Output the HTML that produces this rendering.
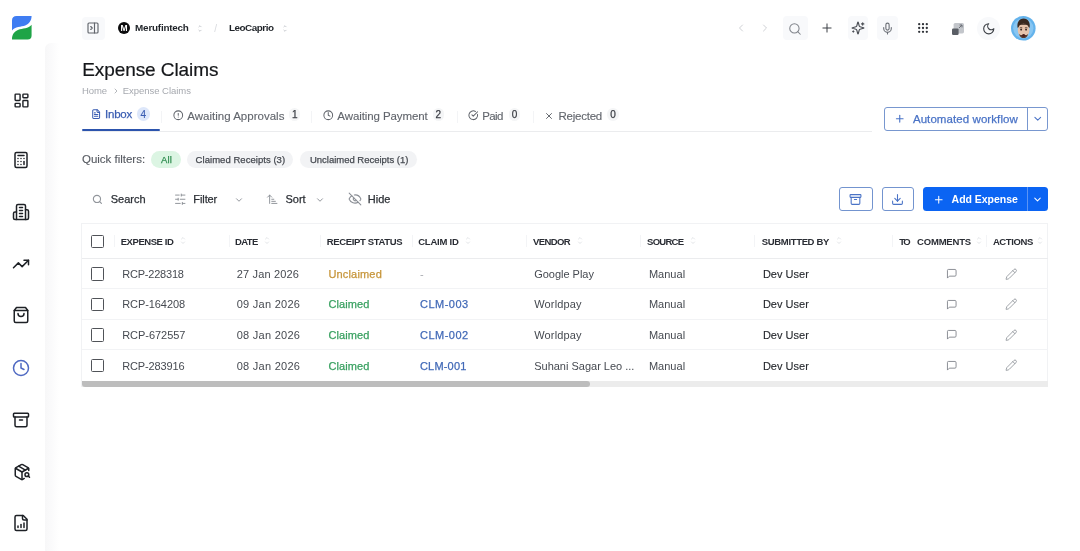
<!DOCTYPE html>
<html lang="en"><head><meta charset="utf-8"><title>Expense Claims</title>
<style>
*{box-sizing:border-box;margin:0;padding:0}
html,body{width:1080px;height:551px;overflow:hidden;background:#fff;font-family:"Liberation Sans",sans-serif}
body{position:relative}
.a{position:absolute}
.t{position:absolute;white-space:nowrap;line-height:1;font-family:"Liberation Sans",sans-serif}
svg{position:absolute;overflow:visible}
.ic{fill:none;stroke-linecap:round;stroke-linejoin:round}
.hl{position:absolute;height:1px;background:#f2f3f5}
.vs{position:absolute;width:1px;background:#f3f4f6}
.cb{position:absolute;width:13.4px;height:13.4px;border:1.4px solid #505358;border-radius:1.5px;background:#fff}
.bdg{position:absolute;border-radius:7px;background:#f4f5f6}
.pill{position:absolute;border-radius:9px;background:#f2f3f5;height:17px;top:151px}
.tl{position:absolute;left:0;top:0;width:1080px;height:551px;will-change:transform}

</style></head>
<body>
<!-- content panel subtle left shade -->
<div class="a" style="left:45px;top:43px;width:14px;height:508px;background:linear-gradient(90deg,#f7f7f8 0%,#fafafb 40%,#ffffff 100%);border-top-left-radius:6px"></div>

<!-- logo -->
<svg style="left:12px;top:15.6px" width="19.6" height="23.4" viewBox="0 0 19.6 23.4">
<path d="M0,14.5 L0,4.6 Q0,0 4.6,0 L19.6,0 C19.6,4.4 17.2,8 13.2,9.5 C9.2,10.9 3,10.6 0,14.5 Z" fill="#3f7df2"/>
<path d="M19.6,8.8 L19.6,19.4 Q19.6,23.4 15.6,23.4 L0,23.4 C0,18.6 2.4,15.4 6.4,13.8 C10.4,12.3 16.6,12.700 19.6,8.8 Z" fill="#1fa447"/>
</svg>

<!-- sidebar icons -->
<svg class="ic" style="left:12.700px;top:92.100px" width="17" height="17" viewBox="0 0 24 24" stroke="#1e2126" stroke-width="2"><rect width="7" height="9" x="3" y="3" rx="1"/><rect width="7" height="5" x="14" y="3" rx="1"/><rect width="7" height="9" x="14" y="12" rx="1"/><rect width="7" height="5" x="3" y="16" rx="1"/></svg>
<svg class="ic" style="left:12px;top:151px" width="18" height="18" viewBox="0 0 24 24" stroke="#1e2126" stroke-width="2"><rect width="16" height="20" x="4" y="2" rx="2"/><line x1="8" x2="16" y1="6" y2="6"/><line x1="16" x2="16" y1="14" y2="18"/><path d="M16 10h.01"/><path d="M12 10h.01"/><path d="M8 10h.01"/><path d="M12 14h.01"/><path d="M8 14h.01"/><path d="M12 18h.01"/><path d="M8 18h.01"/></svg>
<svg class="ic" style="left:12.300px;top:203px" width="18" height="18" viewBox="0 0 24 24" stroke="#1e2126" stroke-width="2"><path d="M6 22V4a2 2 0 0 1 2-2h8a2 2 0 0 1 2 2v18Z"/><path d="M6 12H4a2 2 0 0 0-2 2v6a2 2 0 0 0 2 2h2"/><path d="M18 9h2a2 2 0 0 1 2 2v9a2 2 0 0 1-2 2h-2"/><path d="M10 6h4"/><path d="M10 10h4"/><path d="M10 14h4"/><path d="M10 18h4"/></svg>
<svg class="ic" style="left:12.200px;top:255.3px" width="18" height="18" viewBox="0 0 24 24" stroke="#1e2126" stroke-width="2"><polyline points="22 7 13.5 15.5 8.5 10.5 2 17"/><polyline points="16 7 22 7 22 13"/></svg>
<svg class="ic" style="left:12.200px;top:306.400px" width="18" height="18" viewBox="0 0 24 24" stroke="#1e2126" stroke-width="2"><path d="M6 2 3 6v14a2 2 0 0 0 2 2h14a2 2 0 0 0 2-2V6l-3-4Z"/><path d="M3 6h18"/><path d="M16 10a4 4 0 0 1-8 0"/></svg>
<svg class="ic" style="left:12.200px;top:358.7px" width="18" height="18" viewBox="0 0 24 24" stroke="#4f69c2" stroke-width="2"><circle cx="12" cy="12" r="10"/><polyline points="12 6 12 12 16 14"/></svg>
<svg class="ic" style="left:12.400px;top:410.600px" width="18" height="18" viewBox="0 0 24 24" stroke="#1e2126" stroke-width="2"><rect width="20" height="5" x="2" y="3" rx="1"/><path d="M4 8v11a2 2 0 0 0 2 2h12a2 2 0 0 0 2-2V8"/><path d="M10 12h4"/></svg>
<svg class="ic" style="left:12.500px;top:462.600px" width="18" height="18" viewBox="0 0 24 24" stroke="#1e2126" stroke-width="2"><path d="M21 10V8a2 2 0 0 0-1-1.73l-7-4a2 2 0 0 0-2 0l-7 4A2 2 0 0 0 3 8v8a2 2 0 0 0 1 1.73l7 4a2 2 0 0 0 2 0l2-1.14"/><path d="m7.5 4.27 9 5.15"/><polyline points="3.29 7 12 12 20.71 7"/><line x1="12" x2="12" y1="22" y2="12"/><circle cx="18.500" cy="15.500" r="2.500"/><path d="M20.270 17.270 22 19"/></svg>
<svg class="ic" style="left:12.400px;top:514.300px" width="18" height="18" viewBox="0 0 24 24" stroke="#1e2126" stroke-width="2"><path d="M15 2H6a2 2 0 0 0-2 2v16a2 2 0 0 0 2 2h12a2 2 0 0 0 2-2V7Z"/><path d="M14 2v4a2 2 0 0 0 2 2h4"/><path d="M8 18v-2"/><path d="M12 18v-4"/><path d="M16 18v-6"/></svg>

<!-- top bar left -->
<div class="a" style="left:82px;top:17px;width:22.5px;height:22.5px;border-radius:4px;background:#f8f9fb"></div>
<svg class="ic" style="left:87.3px;top:22.3px" width="12" height="12" viewBox="0 0 24 24" stroke="#62666d" stroke-width="2.300"><rect x="2" y="2" width="20" height="20" rx="2"/><path d="M15 2v20"/><path d="M7.500 9l3 3-3 3"/></svg>
<div class="a" style="left:118.2px;top:22.4px;width:12px;height:12px;border-radius:50%;background:#0c0c0d;color:#fff;font-size:8.5px;font-weight:700;line-height:12.6px;text-align:center;will-change:transform">M</div>
<svg class="ic" style="left:197.300px;top:24.300px" width="6" height="9" viewBox="0 0 6 9" stroke="#c9ccd1" stroke-width="1"><path d="M1.900 2.800 3 1.700 4.100 2.800"/><path d="M1.900 6.200 3 7.300 4.100 6.200"/></svg>
<svg class="ic" style="left:281.700px;top:24.300px" width="6" height="9" viewBox="0 0 6 9" stroke="#c9ccd1" stroke-width="1"><path d="M1.900 2.800 3 1.700 4.100 2.800"/><path d="M1.900 6.200 3 7.300 4.100 6.200"/></svg>

<!-- top bar right -->
<svg class="ic" style="left:735px;top:22px" width="12" height="12" viewBox="0 0 24 24" stroke="#cfd1d5" stroke-width="2"><path d="m15 18-6-6 6-6"/></svg>
<svg class="ic" style="left:759px;top:22px" width="12" height="12" viewBox="0 0 24 24" stroke="#cfd1d5" stroke-width="2"><path d="m9 18 6-6-6-6"/></svg>
<div class="a" style="left:783px;top:16.300px;width:24.500px;height:24px;border-radius:4px;background:#f8f9fb"></div>
<svg class="ic" style="left:788.300px;top:21.600px" width="14" height="14" viewBox="0 0 24 24" stroke="#80848b" stroke-width="1.800"><circle cx="11" cy="11" r="8"/><path d="m21 21-4.300-4.300"/></svg>
<svg class="ic" style="left:819.700px;top:21.300px" width="14" height="14" viewBox="0 0 24 24" stroke="#3a3d43" stroke-width="1.700"><path d="M5 12h14"/><path d="M12 5v14"/></svg>
<div class="a" style="left:848px;top:16.300px;width:19.500px;height:24px;border-radius:4px;background:#f8f9fb"></div>
<svg class="ic" style="left:850.700px;top:21.400px" width="14" height="14" viewBox="0 0 24 24" stroke="#4a4e55" stroke-width="2"><path d="M9.937 15.500A2 2 0 0 0 8.500 14.063l-6.135-1.582a.5.500 0 0 1 0-.962L8.500 9.936A2 2 0 0 0 9.937 8.500l1.582-6.135a.5.500 0 0 1 .963 0L14.063 8.500A2 2 0 0 0 15.500 9.937l6.135 1.581a.5.500 0 0 1 0 .964L15.500 14.063a2 2 0 0 0-1.437 1.437l-1.582 6.135a.5.500 0 0 1-.963 0z"/><path d="M20 3v4"/><path d="M22 5h-4"/><path d="M4 17v2"/><path d="M5 18H3"/></svg>
<div class="a" style="left:876.700px;top:16.300px;width:21px;height:24px;border-radius:4px;background:#f8f9fb"></div>
<svg class="ic" style="left:881.300px;top:21.600px" width="13" height="13" viewBox="0 0 24 24" stroke="#6a6e75" stroke-width="2"><path d="M12 2a3 3 0 0 0-3 3v7a3 3 0 0 0 6 0V5a3 3 0 0 0-3-3Z"/><path d="M19 10v2a7 7 0 0 1-14 0v-2"/><line x1="12" x2="12" y1="19" y2="22"/></svg>
<svg style="left:918px;top:23.200px" width="10" height="10" viewBox="0 0 10 10" fill="#2f3238"><circle cx="1.2" cy="1.2" r="1.150"/><circle cx="5.0" cy="1.2" r="1.150"/><circle cx="8.8" cy="1.2" r="1.150"/><circle cx="1.2" cy="5.0" r="1.150"/><circle cx="5.0" cy="5.0" r="1.150"/><circle cx="8.8" cy="5.0" r="1.150"/><circle cx="1.2" cy="8.8" r="1.150"/><circle cx="5.0" cy="8.8" r="1.150"/><circle cx="8.8" cy="8.8" r="1.150"/></svg>
<svg style="left:951.700px;top:22.500px" width="12" height="12" viewBox="0 0 12 12"><rect x="1.600" y="0" width="10.400" height="10.400" rx="1.600" fill="#c3c6cb"/><rect x="0" y="5.400" width="6.600" height="6.600" rx="1.200" fill="#5a5e65"/><path d="M7 5 10 2M7.600 2H10v2.400" stroke="#6b6f76" stroke-width="1" fill="none"/></svg>
<div class="a" style="left:976.700px;top:16.500px;width:23.500px;height:23.500px;border-radius:50%;background:#f8f9fb"></div>
<svg class="ic" style="left:981.800px;top:21.600px" width="13.500" height="13.500" viewBox="0 0 24 24" stroke="#3c4046" stroke-width="2"><path d="M12 3a6 6 0 0 0 9 9 9 9 0 1 1-9-9Z"/></svg>
<!-- avatar -->
<svg style="left:1011.400px;top:15.700px" width="24.600" height="24.600" viewBox="0 0 25 25">
<circle cx="12.500" cy="12.500" r="12.500" fill="#64b3ec"/>
<circle cx="12.500" cy="12.500" r="10.300" fill="#88c6f2"/>
<g>
<path d="M6.700 12C5.800 6.500 8.200 2.800 12.800 2.600C17.400 2.800 19.800 6.500 18.900 12Z" fill="#3a2920"/>
<ellipse cx="12.800" cy="14.600" rx="5.900" ry="7" fill="#e7c3ab"/>
<path d="M7 10.800C7.300 8.200 9 7.200 12.800 7.500C16.600 7.200 18.300 8.200 18.600 10.800C18 9.200 16.500 8.600 12.800 8.900C9.100 8.600 7.600 9.200 7 10.800Z" fill="#3a2920"/>
<path d="M8.200 18.200C9 21.500 10.800 22.400 12.800 22.400S16.600 21.500 17.400 18.200C16 19.600 14.600 19.300 12.800 19.300S9.600 19.600 8.200 18.200Z" fill="#5b3b2e"/>
<ellipse cx="12.800" cy="19.700" rx="1.500" ry="1.300" fill="#4a1f1c"/>
<ellipse cx="10.300" cy="13.800" rx="1" ry="1.100" fill="#3b2a24"/><ellipse cx="15.300" cy="13.800" rx="1" ry="1.100" fill="#3b2a24"/>
<path d="M8.800 12.100Q10.200 11.200 11.500 12M14.100 12Q15.400 11.200 16.800 12.100" stroke="#4a342a" stroke-width=".7" fill="none"/>
</g>
</svg>

<!-- breadcrumb chevron -->
<svg class="ic" style="left:111.500px;top:86.800px" width="8" height="8" viewBox="0 0 24 24" stroke="#a6a9af" stroke-width="2.500"><path d="m9 18 6-6-6-6"/></svg>

<!-- tabs -->
<div class="hl" style="left:82px;top:131px;width:789.500px;background:#ebecee"></div>
<div class="a" style="left:82px;top:128.600px;width:78px;height:2.400px;background:#2c54ad;border-radius:1px"></div>
<div class="vs" style="left:161px;top:111px;height:12px"></div>
<div class="vs" style="left:311px;top:111px;height:12px"></div>
<div class="vs" style="left:457px;top:111px;height:12px"></div>
<div class="vs" style="left:532.500px;top:111px;height:12px"></div>
<!-- tab icons -->
<svg class="ic" style="left:91.100px;top:109.300px" width="10.300" height="10.300" viewBox="0 0 24 24" stroke="#3a5db2" stroke-width="2.400"><path d="M15 2H6a2 2 0 0 0-2 2v16a2 2 0 0 0 2 2h12a2 2 0 0 0 2-2V7Z"/><path d="M14 2v4a2 2 0 0 0 2 2h4"/><path d="M10 9H8"/><path d="M16 13H8"/><path d="M16 17H8"/></svg>
<svg class="ic" style="left:173.400px;top:110.400px" width="10.500" height="10.500" viewBox="0 0 24 24" stroke="#60646b" stroke-width="2.300"><circle cx="12" cy="12" r="10"/><line x1="12" x2="12" y1="8" y2="12"/><line x1="12" x2="12.010" y1="16" y2="16"/></svg>
<svg class="ic" style="left:322.800px;top:110.400px" width="10.500" height="10.500" viewBox="0 0 24 24" stroke="#60646b" stroke-width="2.300"><circle cx="12" cy="12" r="10"/><polyline points="12 6 12 12 16 14"/></svg>
<svg class="ic" style="left:468.400px;top:110.400px" width="10.500" height="10.500" viewBox="0 0 24 24" stroke="#60646b" stroke-width="2.300"><path d="M21.801 10A10 10 0 1 1 17 3.335"/><path d="m9 11 3 3L22 4"/></svg>
<svg class="ic" style="left:543.900px;top:110.600px" width="10" height="10" viewBox="0 0 24 24" stroke="#60646b" stroke-width="2.300"><path d="M18 6 6 18"/><path d="m6 6 12 12"/></svg>
<!-- badges -->
<div class="bdg" style="left:136.700px;top:107.400px;width:13.800px;height:13.800px;background:#dde7fa"></div>
<div class="bdg" style="left:288.900px;top:108px;width:11.200px;height:13px"></div>
<div class="bdg" style="left:432.600px;top:108px;width:11.800px;height:13px"></div>
<div class="bdg" style="left:508.600px;top:108px;width:11.800px;height:13px"></div>
<div class="bdg" style="left:607px;top:108px;width:11.800px;height:13px"></div>

<!-- automated workflow button -->
<div class="a" style="left:884px;top:107px;width:164px;height:24px;border:1px solid #7897cf;border-radius:3px"></div>
<div class="a" style="left:1027px;top:107px;width:1px;height:24px;background:#7897cf"></div>
<svg class="ic" style="left:894.400px;top:113.300px" width="11.500" height="11.500" viewBox="0 0 24 24" stroke="#4a73c6" stroke-width="2.300"><path d="M5 12h14"/><path d="M12 5v14"/></svg>
<svg class="ic" style="left:1032.400px;top:113.200px" width="11.500" height="11.500" viewBox="0 0 24 24" stroke="#4a73c6" stroke-width="2.200"><path d="m6 9 6 6 6-6"/></svg>

<!-- quick filter pills -->
<div class="pill" style="left:151.100px;width:29.600px;background:#dcf5e3"></div>
<div class="pill" style="left:187.300px;width:106px"></div>
<div class="pill" style="left:300.400px;width:117px"></div>

<!-- toolbar icons -->
<svg class="ic" style="left:92.200px;top:194.300px" width="10.800" height="10.800" viewBox="0 0 24 24" stroke="#92969c" stroke-width="2.500"><circle cx="11" cy="11" r="8"/><path d="m21 21-4.300-4.300"/></svg>
<svg class="ic" style="left:173.800px;top:193.300px" width="12.500" height="12.500" viewBox="0 0 24 24" stroke="#8a8e95" stroke-width="1.800"><line x1="21" x2="14" y1="4" y2="4"/><line x1="10" x2="3" y1="4" y2="4"/><line x1="21" x2="12" y1="12" y2="12"/><line x1="8" x2="3" y1="12" y2="12"/><line x1="21" x2="16" y1="20" y2="20"/><line x1="12" x2="3" y1="20" y2="20"/><line x1="14" x2="14" y1="2" y2="6"/><line x1="8" x2="8" y1="10" y2="14"/><line x1="16" x2="16" y1="18" y2="22"/></svg>
<svg class="ic" style="left:233.900px;top:194.700px" width="10" height="10" viewBox="0 0 24 24" stroke="#8d9198" stroke-width="2.300"><path d="m6 9 6 6 6-6"/></svg>
<svg class="ic" style="left:266px;top:193.300px" width="12.500" height="12.500" viewBox="0 0 24 24" stroke="#8a8e95" stroke-width="1.800"><path d="m3 8 4-4 4 4"/><path d="M7 4v16"/><path d="M11 12h4"/><path d="M11 16h7"/><path d="M11 20h10"/></svg>
<svg class="ic" style="left:314.600px;top:194.700px" width="10" height="10" viewBox="0 0 24 24" stroke="#8d9198" stroke-width="2.300"><path d="m6 9 6 6 6-6"/></svg>
<svg class="ic" style="left:347.600px;top:192.300px" width="14" height="14" viewBox="0 0 24 24" stroke="#8a8e95" stroke-width="1.800"><path d="M10.733 5.076a10.744 10.744 0 0 1 11.205 6.575 1 1 0 0 1 0 .696 10.747 10.747 0 0 1-1.444 2.490"/><path d="M14.084 14.158a3 3 0 0 1-4.242-4.242"/><path d="M17.479 17.499a10.750 10.750 0 0 1-15.417-5.151 1 1 0 0 1 0-.696 10.750 10.750 0 0 1 4.446-5.143"/><path d="m2 2 20 20"/></svg>

<!-- right toolbar buttons -->
<div class="a" style="left:839px;top:187px;width:33.700px;height:24px;border:1px solid #7394cf;border-radius:3px"></div>
<svg class="ic" style="left:849.300px;top:193px" width="13" height="13" viewBox="0 0 24 24" stroke="#4a73c6" stroke-width="2"><rect width="20" height="5" x="2" y="3" rx="1"/><path d="M4 8v11a2 2 0 0 0 2 2h12a2 2 0 0 0 2-2V8"/><path d="M10 12h4"/></svg>
<div class="a" style="left:881.600px;top:187px;width:32.400px;height:24px;border:1px solid #7394cf;border-radius:3px"></div>
<svg class="ic" style="left:891.300px;top:192.800px" width="13" height="13" viewBox="0 0 24 24" stroke="#4a73c6" stroke-width="2"><path d="M21 15v4a2 2 0 0 1-2 2H5a2 2 0 0 1-2-2v-4"/><polyline points="7 10 12 15 17 10"/><line x1="12" x2="12" y1="15" y2="3"/></svg>
<div class="a" style="left:923.300px;top:187px;width:124.700px;height:24px;background:#0b64f3;border-radius:3.500px"></div>
<div class="a" style="left:1027.300px;top:187px;width:1px;height:24px;background:#5b94f5"></div>
<svg class="ic" style="left:932.800px;top:193.600px" width="11.500" height="11.500" viewBox="0 0 24 24" stroke="#fff" stroke-width="2.200"><path d="M5 12h14"/><path d="M12 5v14"/></svg>
<svg class="ic" style="left:1032.400px;top:193.800px" width="11" height="11" viewBox="0 0 24 24" stroke="#fff" stroke-width="2.200"><path d="m6 9 6 6 6-6"/></svg>

<!-- table -->
<div class="a" style="left:81px;top:223px;width:967px;height:164px;border:1px solid #f1f2f4;border-bottom:none"></div>
<div class="hl" style="left:82px;top:258px;width:966px;background:#ebecee"></div>
<div class="hl" style="left:82px;top:288px;width:966px"></div>
<div class="hl" style="left:82px;top:319px;width:966px"></div>
<div class="hl" style="left:82px;top:349px;width:966px"></div>
<!-- scrollbar -->
<div class="a" style="left:82px;top:381px;width:966px;height:6px;background:#ececec"></div>
<div class="a" style="left:82px;top:381px;width:508px;height:6px;background:#bdbdbd;border-radius:0 3px 3px 3px"></div>
<!-- header separators -->
<div class="vs" style="left:113.500px;top:234.500px;height:12.500px"></div>
<div class="vs" style="left:228.700px;top:234.500px;height:12.500px"></div>
<div class="vs" style="left:320px;top:234.500px;height:12.500px"></div>
<div class="vs" style="left:411.500px;top:234.500px;height:12.500px"></div>
<div class="vs" style="left:525.700px;top:234.500px;height:12.500px"></div>
<div class="vs" style="left:640.300px;top:234.500px;height:12.500px"></div>
<div class="vs" style="left:754.300px;top:234.500px;height:12.500px"></div>
<div class="vs" style="left:891.800px;top:234.500px;height:12.500px"></div>
<div class="vs" style="left:985.500px;top:234.500px;height:12.500px"></div>
<svg class="ic" style="left:179.9px;top:236.3px" width="6" height="9" viewBox="0 0 6 9" stroke="#e3e5e8" stroke-width="1"><path d="M1.500 3 3 1.500 4.500 3"/><path d="M1.500 6 3 7.500 4.500 6"/></svg>
<svg class="ic" style="left:264.3px;top:236.3px" width="6" height="9" viewBox="0 0 6 9" stroke="#e3e5e8" stroke-width="1"><path d="M1.500 3 3 1.500 4.500 3"/><path d="M1.500 6 3 7.500 4.500 6"/></svg>
<svg class="ic" style="left:464.8px;top:236.3px" width="6" height="9" viewBox="0 0 6 9" stroke="#e3e5e8" stroke-width="1"><path d="M1.500 3 3 1.500 4.500 3"/><path d="M1.500 6 3 7.500 4.500 6"/></svg>
<svg class="ic" style="left:577.0px;top:236.3px" width="6" height="9" viewBox="0 0 6 9" stroke="#e3e5e8" stroke-width="1"><path d="M1.500 3 3 1.500 4.500 3"/><path d="M1.500 6 3 7.500 4.500 6"/></svg>
<svg class="ic" style="left:690.3px;top:236.3px" width="6" height="9" viewBox="0 0 6 9" stroke="#e3e5e8" stroke-width="1"><path d="M1.500 3 3 1.500 4.500 3"/><path d="M1.500 6 3 7.500 4.500 6"/></svg>
<svg class="ic" style="left:835.9px;top:236.3px" width="6" height="9" viewBox="0 0 6 9" stroke="#e3e5e8" stroke-width="1"><path d="M1.500 3 3 1.500 4.500 3"/><path d="M1.500 6 3 7.500 4.500 6"/></svg>
<svg class="ic" style="left:976.0px;top:236.3px" width="6" height="9" viewBox="0 0 6 9" stroke="#e3e5e8" stroke-width="1"><path d="M1.500 3 3 1.500 4.500 3"/><path d="M1.500 6 3 7.500 4.500 6"/></svg>
<svg class="ic" style="left:1037.0px;top:236.3px" width="6" height="9" viewBox="0 0 6 9" stroke="#e3e5e8" stroke-width="1"><path d="M1.500 3 3 1.500 4.500 3"/><path d="M1.500 6 3 7.500 4.500 6"/></svg>

<div class="cb" style="left:91px;top:235px"></div>
<div class="cb" style="left:91px;top:267.2px"></div>
<div class="cb" style="left:91px;top:297.6px"></div>
<div class="cb" style="left:91px;top:328.2px"></div>
<div class="cb" style="left:91px;top:358.9px"></div>

<svg class="ic" style="left:946.2px;top:268.3px" width="11.500" height="11.500" viewBox="0 0 24 24" stroke="#7b7f86" stroke-width="1.800"><path d="M21 15a2 2 0 0 1-2 2H7l-4 4V5a2 2 0 0 1 2-2h14a2 2 0 0 1 2 2z"/></svg>
<svg class="ic" style="left:1005.0px;top:267.7px" width="12.500" height="12.500" viewBox="0 0 24 24" stroke="#8d9198" stroke-width="1.600"><path d="M21.174 6.812a1 1 0 0 0-3.986-3.987L3.842 16.174a2 2 0 0 0-.5.830l-1.321 4.352a.5.500 0 0 0 .623.622l4.353-1.320a2 2 0 0 0 .830-.497z"/><path d="m15 5 4 4"/></svg>
<svg class="ic" style="left:946.2px;top:298.7px" width="11.500" height="11.500" viewBox="0 0 24 24" stroke="#7b7f86" stroke-width="1.800"><path d="M21 15a2 2 0 0 1-2 2H7l-4 4V5a2 2 0 0 1 2-2h14a2 2 0 0 1 2 2z"/></svg>
<svg class="ic" style="left:1005.0px;top:298.1px" width="12.500" height="12.500" viewBox="0 0 24 24" stroke="#8d9198" stroke-width="1.600"><path d="M21.174 6.812a1 1 0 0 0-3.986-3.987L3.842 16.174a2 2 0 0 0-.5.830l-1.321 4.352a.5.500 0 0 0 .623.622l4.353-1.320a2 2 0 0 0 .830-.497z"/><path d="m15 5 4 4"/></svg>
<svg class="ic" style="left:946.2px;top:329.3px" width="11.500" height="11.500" viewBox="0 0 24 24" stroke="#7b7f86" stroke-width="1.800"><path d="M21 15a2 2 0 0 1-2 2H7l-4 4V5a2 2 0 0 1 2-2h14a2 2 0 0 1 2 2z"/></svg>
<svg class="ic" style="left:1005.0px;top:328.7px" width="12.500" height="12.500" viewBox="0 0 24 24" stroke="#8d9198" stroke-width="1.600"><path d="M21.174 6.812a1 1 0 0 0-3.986-3.987L3.842 16.174a2 2 0 0 0-.5.830l-1.321 4.352a.5.500 0 0 0 .623.622l4.353-1.320a2 2 0 0 0 .830-.497z"/><path d="m15 5 4 4"/></svg>
<svg class="ic" style="left:946.2px;top:360.0px" width="11.500" height="11.500" viewBox="0 0 24 24" stroke="#7b7f86" stroke-width="1.800"><path d="M21 15a2 2 0 0 1-2 2H7l-4 4V5a2 2 0 0 1 2-2h14a2 2 0 0 1 2 2z"/></svg>
<svg class="ic" style="left:1005.0px;top:359.4px" width="12.500" height="12.500" viewBox="0 0 24 24" stroke="#8d9198" stroke-width="1.600"><path d="M21.174 6.812a1 1 0 0 0-3.986-3.987L3.842 16.174a2 2 0 0 0-.5.830l-1.321 4.352a.5.500 0 0 0 .623.622l4.353-1.320a2 2 0 0 0 .830-.497z"/><path d="m15 5 4 4"/></svg>


<div class="tl">
<span class="t" style="left:135.10px;top:23.22px;font-size:9.9px;font-weight:700;color:#1f2328;letter-spacing:-0.217px;">Merufintech</span>
<span class="t" style="left:214.30px;top:24.14px;font-size:10px;font-weight:400;color:#d9dbdf;letter-spacing:0.000px;">/</span>
<span class="t" style="left:228.90px;top:23.22px;font-size:9.9px;font-weight:700;color:#1f2328;letter-spacing:-0.468px;">LeoCaprio</span>
<span class="t" style="left:82.20px;top:59.72px;font-size:19px;font-weight:400;color:#15171a;letter-spacing:-0.083px;-webkit-text-stroke:0.2px currentColor;">Expense Claims</span>
<span class="t" style="left:82.00px;top:85.96px;font-size:9.5px;font-weight:400;color:#a6a9af;letter-spacing:-0.115px;">Home</span>
<span class="t" style="left:122.70px;top:85.96px;font-size:9.5px;font-weight:400;color:#a6a9af;letter-spacing:-0.026px;">Expense Claims</span>
<span class="t" style="left:105.10px;top:108.97px;font-size:11.5px;font-weight:400;color:#3a5db2;letter-spacing:-0.260px;-webkit-text-stroke:0.25px currentColor;">Inbox</span>
<span class="t" style="left:187.30px;top:110.77px;font-size:11.5px;font-weight:400;color:#62666d;letter-spacing:0.008px;-webkit-text-stroke:0.12px currentColor;">Awaiting Approvals</span>
<span class="t" style="left:337.30px;top:110.77px;font-size:11.5px;font-weight:400;color:#62666d;letter-spacing:-0.090px;-webkit-text-stroke:0.12px currentColor;">Awaiting Payment</span>
<span class="t" style="left:482.20px;top:110.77px;font-size:11.5px;font-weight:400;color:#62666d;letter-spacing:-0.644px;-webkit-text-stroke:0.12px currentColor;">Paid</span>
<span class="t" style="left:558.40px;top:110.77px;font-size:11.5px;font-weight:400;color:#62666d;letter-spacing:-0.227px;-webkit-text-stroke:0.12px currentColor;">Rejected</span>
<span class="t" style="left:140.60px;top:110.13px;font-size:10px;font-weight:400;color:#3a5db2;letter-spacing:0.000px;-webkit-text-stroke:0.12px currentColor;">4</span>
<span class="t" style="left:292.10px;top:110.33px;font-size:10px;font-weight:400;color:#3a3d44;letter-spacing:0.000px;-webkit-text-stroke:0.25px currentColor;">1</span>
<span class="t" style="left:435.50px;top:110.33px;font-size:10px;font-weight:400;color:#3a3d44;letter-spacing:0.000px;-webkit-text-stroke:0.25px currentColor;">2</span>
<span class="t" style="left:511.70px;top:110.33px;font-size:10px;font-weight:400;color:#3a3d44;letter-spacing:0.000px;-webkit-text-stroke:0.25px currentColor;">0</span>
<span class="t" style="left:610.20px;top:110.33px;font-size:10px;font-weight:400;color:#3a3d44;letter-spacing:0.000px;-webkit-text-stroke:0.25px currentColor;">0</span>
<span class="t" style="left:912.90px;top:113.77px;font-size:11.5px;font-weight:400;color:#4a73c6;letter-spacing:0.080px;-webkit-text-stroke:0.25px currentColor;">Automated workflow</span>
<span class="t" style="left:82.00px;top:154.07px;font-size:11.5px;font-weight:400;color:#565a61;letter-spacing:-0.013px;-webkit-text-stroke:0.12px currentColor;">Quick filters:</span>
<span class="t" style="left:161.10px;top:154.86px;font-size:9.5px;font-weight:400;color:#2f8d50;letter-spacing:0.069px;-webkit-text-stroke:0.25px currentColor;">All</span>
<span class="t" style="left:195.60px;top:154.86px;font-size:9.5px;font-weight:400;color:#464a51;letter-spacing:0.042px;-webkit-text-stroke:0.25px currentColor;">Claimed Receipts (3)</span>
<span class="t" style="left:310.00px;top:154.86px;font-size:9.5px;font-weight:400;color:#464a51;letter-spacing:-0.016px;-webkit-text-stroke:0.25px currentColor;">Unclaimed Receipts (1)</span>
<span class="t" style="left:110.70px;top:193.89px;font-size:11px;font-weight:400;color:#2c3036;letter-spacing:0.008px;-webkit-text-stroke:0.25px currentColor;">Search</span>
<span class="t" style="left:193.30px;top:193.89px;font-size:11px;font-weight:400;color:#2c3036;letter-spacing:-0.091px;-webkit-text-stroke:0.25px currentColor;">Filter</span>
<span class="t" style="left:285.60px;top:193.89px;font-size:11px;font-weight:400;color:#2c3036;letter-spacing:-0.062px;-webkit-text-stroke:0.25px currentColor;">Sort</span>
<span class="t" style="left:367.80px;top:193.89px;font-size:11px;font-weight:400;color:#2c3036;letter-spacing:-0.008px;-webkit-text-stroke:0.25px currentColor;">Hide</span>
<span class="t" style="left:951.60px;top:194.41px;font-size:10.5px;font-weight:700;color:#ffffff;letter-spacing:-0.033px;">Add Expense</span>
<span class="t" style="left:120.70px;top:236.66px;font-size:9.5px;font-weight:700;color:#2a2d34;letter-spacing:-0.437px;">EXPENSE ID</span>
<span class="t" style="left:235.10px;top:236.66px;font-size:9.5px;font-weight:700;color:#2a2d34;letter-spacing:-0.619px;">DATE</span>
<span class="t" style="left:326.70px;top:236.66px;font-size:9.5px;font-weight:700;color:#2a2d34;letter-spacing:-0.339px;">RECEIPT STATUS</span>
<span class="t" style="left:418.20px;top:236.66px;font-size:9.5px;font-weight:700;color:#2a2d34;letter-spacing:-0.217px;">CLAIM ID</span>
<span class="t" style="left:532.90px;top:236.66px;font-size:9.5px;font-weight:700;color:#2a2d34;letter-spacing:-0.571px;">VENDOR</span>
<span class="t" style="left:647.10px;top:236.66px;font-size:9.5px;font-weight:700;color:#2a2d34;letter-spacing:-0.751px;">SOURCE</span>
<span class="t" style="left:761.80px;top:236.66px;font-size:9.5px;font-weight:700;color:#2a2d34;letter-spacing:-0.341px;">SUBMITTED BY</span>
<span class="t" style="left:899.30px;top:236.66px;font-size:9.5px;font-weight:700;color:#2a2d34;letter-spacing:-1.631px;">TO</span>
<span class="t" style="left:917.10px;top:236.66px;font-size:9.5px;font-weight:700;color:#2a2d34;letter-spacing:-0.203px;">COMMENTS</span>
<span class="t" style="left:992.90px;top:236.66px;font-size:9.5px;font-weight:700;color:#2a2d34;letter-spacing:-0.392px;">ACTIONS</span>
<span class="t" style="left:122.20px;top:268.59px;font-size:11px;font-weight:400;color:#464a51;letter-spacing:-0.199px;">RCP-228318</span>
<span class="t" style="left:236.70px;top:268.59px;font-size:11px;font-weight:400;color:#464a51;letter-spacing:0.164px;">27 Jan 2026</span>
<span class="t" style="left:328.40px;top:268.59px;font-size:11px;font-weight:400;color:#c6953a;letter-spacing:0.179px;-webkit-text-stroke:0.25px currentColor;">Unclaimed</span>
<span class="t" style="left:420.00px;top:268.59px;font-size:11px;font-weight:400;color:#a8abb0;letter-spacing:0.000px;">-</span>
<span class="t" style="left:534.20px;top:268.59px;font-size:11px;font-weight:400;color:#464a51;letter-spacing:-0.014px;">Google Play</span>
<span class="t" style="left:648.90px;top:268.59px;font-size:11px;font-weight:400;color:#464a51;letter-spacing:0.024px;">Manual</span>
<span class="t" style="left:762.90px;top:268.59px;font-size:11px;font-weight:400;color:#26292e;letter-spacing:0.022px;-webkit-text-stroke:0.12px currentColor;">Dev User</span>
<span class="t" style="left:122.20px;top:299.09px;font-size:11px;font-weight:400;color:#464a51;letter-spacing:-0.077px;">RCP-164208</span>
<span class="t" style="left:236.70px;top:299.09px;font-size:11px;font-weight:400;color:#464a51;letter-spacing:0.274px;">09 Jan 2026</span>
<span class="t" style="left:328.40px;top:299.09px;font-size:11px;font-weight:400;color:#38a060;letter-spacing:0.090px;-webkit-text-stroke:0.25px currentColor;">Claimed</span>
<span class="t" style="left:420.00px;top:299.09px;font-size:11px;font-weight:400;color:#4169b7;letter-spacing:0.492px;-webkit-text-stroke:0.25px currentColor;">CLM-003</span>
<span class="t" style="left:534.20px;top:299.09px;font-size:11px;font-weight:400;color:#464a51;letter-spacing:0.162px;">Worldpay</span>
<span class="t" style="left:648.90px;top:299.09px;font-size:11px;font-weight:400;color:#464a51;letter-spacing:0.024px;">Manual</span>
<span class="t" style="left:762.90px;top:299.09px;font-size:11px;font-weight:400;color:#26292e;letter-spacing:0.022px;-webkit-text-stroke:0.12px currentColor;">Dev User</span>
<span class="t" style="left:122.20px;top:329.69px;font-size:11px;font-weight:400;color:#464a51;letter-spacing:-0.033px;">RCP-672557</span>
<span class="t" style="left:236.70px;top:329.69px;font-size:11px;font-weight:400;color:#464a51;letter-spacing:0.274px;">08 Jan 2026</span>
<span class="t" style="left:328.40px;top:329.69px;font-size:11px;font-weight:400;color:#38a060;letter-spacing:0.090px;-webkit-text-stroke:0.25px currentColor;">Claimed</span>
<span class="t" style="left:420.00px;top:329.69px;font-size:11px;font-weight:400;color:#4169b7;letter-spacing:0.492px;-webkit-text-stroke:0.25px currentColor;">CLM-002</span>
<span class="t" style="left:534.20px;top:329.69px;font-size:11px;font-weight:400;color:#464a51;letter-spacing:0.162px;">Worldpay</span>
<span class="t" style="left:648.90px;top:329.69px;font-size:11px;font-weight:400;color:#464a51;letter-spacing:0.024px;">Manual</span>
<span class="t" style="left:762.90px;top:329.69px;font-size:11px;font-weight:400;color:#26292e;letter-spacing:0.022px;-webkit-text-stroke:0.12px currentColor;">Dev User</span>
<span class="t" style="left:122.20px;top:361.19px;font-size:11px;font-weight:400;color:#464a51;letter-spacing:-0.122px;">RCP-283916</span>
<span class="t" style="left:236.70px;top:361.19px;font-size:11px;font-weight:400;color:#464a51;letter-spacing:0.274px;">08 Jan 2026</span>
<span class="t" style="left:328.40px;top:361.19px;font-size:11px;font-weight:400;color:#38a060;letter-spacing:0.090px;-webkit-text-stroke:0.25px currentColor;">Claimed</span>
<span class="t" style="left:420.00px;top:361.19px;font-size:11px;font-weight:400;color:#4169b7;letter-spacing:0.175px;-webkit-text-stroke:0.25px currentColor;">CLM-001</span>
<span class="t" style="left:534.20px;top:361.19px;font-size:11px;font-weight:400;color:#464a51;letter-spacing:-0.005px;">Suhani Sagar Leo ...</span>
<span class="t" style="left:648.90px;top:361.19px;font-size:11px;font-weight:400;color:#464a51;letter-spacing:0.024px;">Manual</span>
<span class="t" style="left:762.90px;top:361.19px;font-size:11px;font-weight:400;color:#26292e;letter-spacing:0.022px;-webkit-text-stroke:0.12px currentColor;">Dev User</span>
</div>
</body></html>
